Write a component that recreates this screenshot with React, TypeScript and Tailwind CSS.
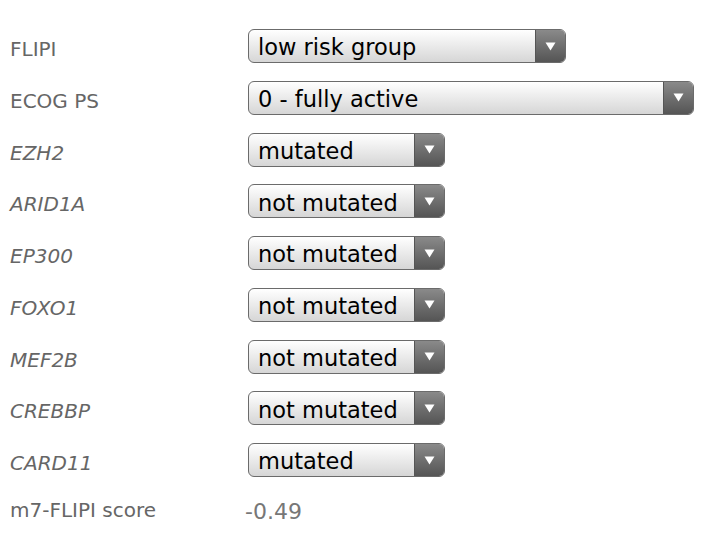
import * as React from 'react';

type Field = {
	label: string;
	value: string;
	italic?: boolean;
	width: string;
};

const fields: Field[] = [
	{ label: 'FLIPI', value: 'low risk group', width: 'w-[318px]' },
	{ label: 'ECOG PS', value: '0 - fully active', width: 'w-[446px]' },
	{ label: 'EZH2', value: 'mutated', italic: true, width: 'w-[197px]' },
	{ label: 'ARID1A', value: 'not mutated', italic: true, width: 'w-[197px]' },
	{ label: 'EP300', value: 'not mutated', italic: true, width: 'w-[197px]' },
	{ label: 'FOXO1', value: 'not mutated', italic: true, width: 'w-[197px]' },
	{ label: 'MEF2B', value: 'not mutated', italic: true, width: 'w-[197px]' },
	{ label: 'CREBBP', value: 'not mutated', italic: true, width: 'w-[197px]' },
	{ label: 'CARD11', value: 'mutated', italic: true, width: 'w-[197px]' },
];

function FakeSelect({ value, width }: { value: string; width: string }) {
	return (
		<div
			className={`${width} flex h-[34px] overflow-hidden rounded-[6px] border border-[#6b6b6b] bg-gradient-to-b from-white to-[#d6d6d6]`}
		>
			<span className="flex flex-1 items-center pl-[9px] pt-[3px] text-[22.5px] leading-none text-black">
				{value}
			</span>
			<span className="flex w-[30px] items-center justify-center border-l border-[#555] bg-gradient-to-b from-[#8a8a8a] to-[#555555]">
				<svg width="11" height="9" viewBox="0 0 11 9">
					<path d="M0.5 0.5 L10.5 0.5 L5.5 8.5 Z" fill="#fff" />
				</svg>
			</span>
		</div>
	);
}

export default function App() {
	return (
		<div className="min-h-[537px] bg-white pt-[29px] font-['DejaVu_Sans',Verdana,sans-serif]">
			{fields.map((field) => (
				<div key={field.label} className="flex h-[51.75px] items-start">
					<span
						className={`w-[248px] pl-[10px] pt-[5px] text-[20px] text-[#666] ${field.italic ? 'italic' : ''}`}
					>
						{field.label}
					</span>
					<FakeSelect value={field.value} width={field.width} />
				</div>
			))}
			<div className="flex items-start">
				<span className="w-[245px] pl-[10px] text-[20px] text-[#666]">
					m7-FLIPI score
				</span>
				<span className="text-[22px] text-[#777]">-0.49</span>
			</div>
		</div>
	);
}
